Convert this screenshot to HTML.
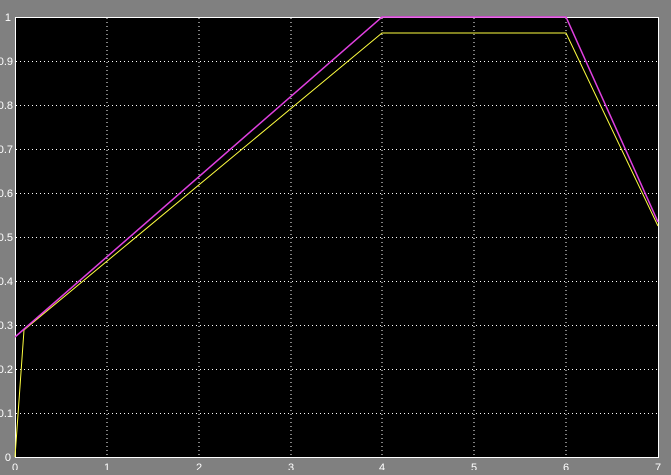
<!DOCTYPE html><html><head><style>body{margin:0;background:#808080;width:671px;height:470px;overflow:hidden}</style></head><body>
<svg width="671" height="470" xmlns="http://www.w3.org/2000/svg" font-family="Liberation Sans, sans-serif" font-size="11" fill="#fff">
<rect x="0" y="0" width="671" height="470" fill="#808080"/>
<rect x="15.5" y="17.5" width="643" height="440" fill="#000" stroke="#fff" stroke-width="1"/>
<g stroke="#fff" stroke-width="1" stroke-dasharray="1,3">
<line x1="107" y1="18" x2="107" y2="457"/><line x1="199" y1="18" x2="199" y2="457"/><line x1="291" y1="18" x2="291" y2="457"/><line x1="382" y1="18" x2="382" y2="457"/><line x1="474" y1="18" x2="474" y2="457"/><line x1="566" y1="18" x2="566" y2="457"/>
<line x1="16" y1="61.5" x2="658" y2="61.5"/><line x1="16" y1="105.5" x2="658" y2="105.5"/><line x1="16" y1="149.5" x2="658" y2="149.5"/><line x1="16" y1="193.5" x2="658" y2="193.5"/><line x1="16" y1="237.5" x2="658" y2="237.5"/><line x1="16" y1="281.5" x2="658" y2="281.5"/><line x1="16" y1="325.5" x2="658" y2="325.5"/><line x1="16" y1="369.5" x2="658" y2="369.5"/><line x1="16" y1="413.5" x2="658" y2="413.5"/>
</g>
<polyline points="15,457 24,330 382,33 566,33 658,226" fill="none" stroke="#ffff40" stroke-width="1"/>
<polyline points="15,337 382,17 566,17 658,222" fill="none" stroke="#e040e0" stroke-width="1.5"/>
<g text-anchor="end">
<text x="11" y="21">1</text><text x="13" y="65">0.9</text><text x="13" y="109">0.8</text><text x="13" y="153">0.7</text><text x="13" y="197">0.6</text><text x="13" y="241">0.5</text><text x="13" y="285">0.4</text><text x="13" y="329">0.3</text><text x="13" y="373">0.2</text><text x="13" y="417">0.1</text><text x="11" y="461">0</text>
</g>
<g text-anchor="middle">
<text x="15" y="471">0</text><text x="107" y="471">1</text><text x="199" y="471">2</text><text x="291" y="471">3</text><text x="382" y="471">4</text><text x="474" y="471">5</text><text x="566" y="471">6</text><text x="658" y="471">7</text>
</g>
</svg></body></html>
